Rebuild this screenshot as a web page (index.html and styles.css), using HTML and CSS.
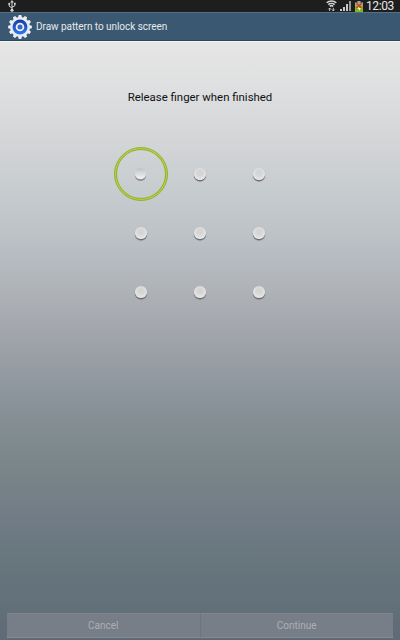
FILE: index.html
```html
<!DOCTYPE html>
<html lang="en">
<head>
    <meta charset="UTF-8">
    <meta name="viewport" content="width=device-width, initial-scale=1.0">
    <title>Draw pattern to unlock screen</title>
    <link rel="stylesheet" href="styles.css">
</head>
<body>
    <div class="screen">
        <div class="statusbar">
            <svg class="usb" width="8" height="12" viewBox="0 0 8 12" fill="none" stroke="#d8d8d8">
                <path d="M4 2v8M1.2 4v2.2L4 8M6.8 3.8v2L4 7.2"/>
                <path d="M4 0l1.8 2.5H2.2z" fill="#d8d8d8" stroke="none"/>
                <circle cx="1.2" cy="3.8" r="1" fill="#d8d8d8" stroke="none"/>
                <path d="M6 2.8h1.7v1.7H6z" fill="#d8d8d8" stroke="none"/>
                <circle cx="4" cy="10.3" r="1.5" fill="#d8d8d8" stroke="none"/>
            </svg>
            <div class="status-right">
                <svg width="11" height="12" viewBox="0 0 11 12" fill="none" stroke="#d5d5d5" stroke-width="1.5">
                    <path d="M.7 2.7C3.2.3 7.8.3 10.3 2.7M2.3 4.6c1.8-1.6 4.6-1.6 6.4 0M3.8 6.3c1-.8 2.4-.8 3.4 0"/>
                    <path d="M3.7 11V8M2.3 9.4L3.7 8l1.2 1.4M7.3 7.8v3M6.1 9.5l1.2 1.4 1.3-1.4" stroke-width=".9"/>
                </svg>
                <svg width="12" height="10" viewBox="0 0 12 10">
                    <path d="M0 8h2v2H0zM3 6h2v4H3zM6 3h2v7H6z" fill="#c9c9c9"/>
                    <path d="M9 0h2v10H9z" fill="#999"/>
                </svg>
                <svg width="8" height="11" viewBox="0 0 8 11">
                    <path d="M2.5 0h3v1.5H8V11H0V1.5h2.5z" fill="#a0a68c"/>
                    <path d="M0 5h8v6H0z" fill="#83b51b"/>
                    <path d="M1.5 2.5l5 4.5M6.5 2.5l-5 4.5" stroke="#d63b20" stroke-width="1.5"/>
                    <path d="M4 5.5L2.5 8H4v2l2-3H4z" fill="#f2f5da"/>
                </svg>
                <span class="clock">12:03</span>
            </div>
        </div>

        <div class="header">
            <svg class="gear" width="24" height="24" viewBox="-12 -12 24 24">
                <defs>
                    <linearGradient id="blue" x1="0" y1="0" x2="0" y2="1">
                        <stop offset="0" stop-color="#183ba4"/>
                        <stop offset="1" stop-color="#2c78ef"/>
                    </linearGradient>
                </defs>
                <g fill="#e9edf1">
                    <circle r="10"/>
                    <path id="teeth" d="M-2.1-9l.8-2.9h2.6l.8 2.9v18l-.8 2.9h-2.6L-2.1 9z"/>
                    <use href="#teeth" transform="rotate(30)"/>
                    <use href="#teeth" transform="rotate(60)"/>
                    <use href="#teeth" transform="rotate(90)"/>
                    <use href="#teeth" transform="rotate(120)"/>
                    <use href="#teeth" transform="rotate(150)"/>
                </g>
                <circle r="7.5" fill="url(#blue)"/>
                <circle r="3.4" fill="#3c66c4" stroke="#e9f0f8" stroke-width="1.8"/>
            </svg>
            <span class="title">Draw pattern to unlock screen</span>
        </div>

        <div class="content">
            <p class="message">Release finger when finished</p>
            <div class="pattern">
                <div class="cell selected"><span class="dot"></span></div>
                <div class="cell"><span class="dot"></span></div>
                <div class="cell"><span class="dot"></span></div>
                <div class="cell"><span class="dot"></span></div>
                <div class="cell"><span class="dot"></span></div>
                <div class="cell"><span class="dot"></span></div>
                <div class="cell"><span class="dot"></span></div>
                <div class="cell"><span class="dot"></span></div>
                <div class="cell"><span class="dot"></span></div>
            </div>
        </div>

        <div class="footer">
            <button class="button" disabled>Cancel</button>
            <button class="button" disabled>Continue</button>
        </div>
    </div>
</body>
</html>
```
FILE: styles.css
```css
* {
    box-sizing: border-box;
}
body {
    margin: 0;
    font-family: Roboto, "Liberation Sans", sans-serif;
}
.screen {
    width: 400px;
    height: 640px;
    display: flex;
    flex-direction: column;
    overflow: hidden;
    background: linear-gradient(#e6e6e6 41px, #dedfe0 90px, #d4d5d7 140px, #c8cdd0 185px, #bcc2c5 235px, #b7bcc2 255px, #b0b4b8 287px, #a1a5ab 335px, #8f979f 385px, #838d92 425px, #7a8689 465px, #727c86 515px, #66757c 570px, #62707a 607px, #5e6a75 640px);
}
.statusbar {
    height: 12px;
    background: #1e1e1e;
    display: flex;
    align-items: center;
    justify-content: space-between;
    padding: 0 6px 0 8px;
}
.status-right {
    display: flex;
    align-items: center;
    gap: 3px;
}
.clock {
    color: #e8e8e8;
    font-size: 12px;
    line-height: 12px;
    width: 28px;
    white-space: nowrap;
    letter-spacing: -0.4px;
}
.header {
    height: 29px;
    background: #3a5871;
    border-top: 1px solid #557084;
    border-bottom: 1px solid #2b465d;
    display: flex;
    align-items: center;
    padding-left: 8px;
    gap: 4px;
}
.title {
    color: #e5eaee;
    font-size: 10px;
    line-height: 14px;
    padding-top: 1px;
    letter-spacing: -0.05px;
}
.content {
    flex: 1;
    border-top: 1px solid #f5f5f5;
}
.message {
    margin: 48px 0 0;
    text-align: center;
    color: #111;
    font-size: 11.4px;
    line-height: 14px;
}
.pattern {
    display: grid;
    grid-template-columns: repeat(3, 59px);
    grid-auto-rows: 59px;
    width: 177px;
    margin: 40px 0 0 111px;
}
.cell {
    display: flex;
    align-items: center;
    justify-content: center;
}
.dot {
    width: 12px;
    height: 12px;
    border-radius: 50%;
    background: radial-gradient(circle at 50% 40%, #d5d5d5 25%, #e8e8e8 75%);
    box-shadow: 0 1.5px 1px #666a6e;
}
.selected::before {
    content: "";
    box-sizing: border-box;
    position: absolute;
    width: 54px;
    height: 54px;
    border: 1px solid #94b02c;
    border-radius: 50%;
    box-shadow: inset 0 0 0 1px #b6d645, inset 0 0 0 2px #94b02c;
}
.selected .dot {
    width: 11px;
    height: 11px;
    background: linear-gradient(#bfc1c4, #f4f4f4);
    box-shadow: 0 2px 0 #8e9195;
}
.footer {
    height: 27px;
    padding: 0 7px 2px;
    display: flex;
}
.button {
    flex: 1;
    padding: 0;
    border: 0;
    border-top: 1px solid #7e868e;
    border-bottom: 1px solid #858a92;
    background: #787e87;
    color: #abb0b5;
    font-family: inherit;
    font-size: 10px;
}
.button + .button {
    border-left: 1px solid #6e757e;
}
```
